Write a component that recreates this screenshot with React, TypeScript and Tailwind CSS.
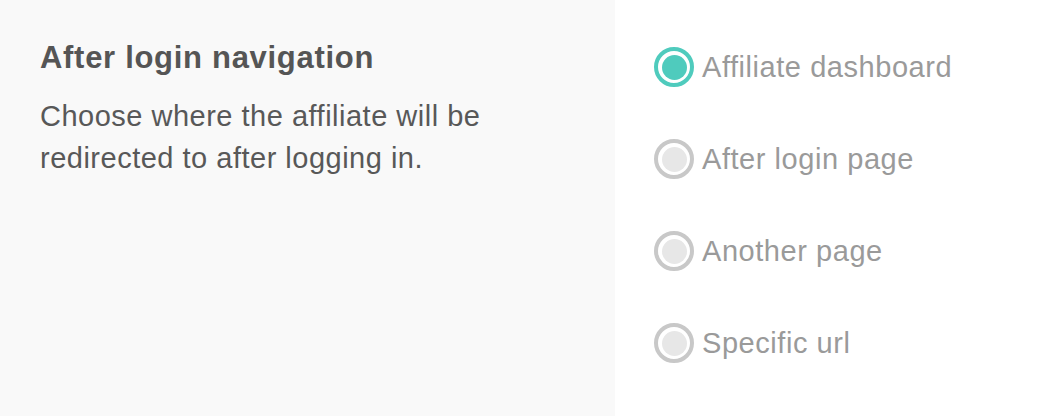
import React, { useState } from 'react';

const options = ['Affiliate dashboard', 'After login page', 'Another page', 'Specific url'];

function Radio({ checked }: { checked: boolean }) {
  return (
    <span
      className={
        'flex h-[40px] w-[40px] shrink-0 items-center justify-center rounded-full border-[4px] bg-white ' +
        (checked ? 'border-[#4fcbbd]' : 'border-[#c8c8c8]')
      }
    >
      <span
        className={'h-[25px] w-[25px] rounded-full ' + (checked ? 'bg-[#4fcbbd]' : 'bg-[#e7e7e7]')}
      />
    </span>
  );
}

export default function App() {
  const [selected, setSelected] = useState(0);

  return (
    <div className="flex h-[416px] w-[1056px] bg-white font-['Liberation_Sans',Arial,sans-serif]">
      <div className="w-[615px] bg-[#f9f9f9] pl-[40px] pt-[38px]">
        <h2 className="text-[31px] font-bold leading-[40px] tracking-[0.7px] text-[#555555]">
          After login navigation
        </h2>
        <p className="mt-[17px] w-[470px] text-[29px] leading-[42px] tracking-[0.5px] text-[#585858]">
          Choose where the affiliate will be redirected to after logging in.
        </p>
      </div>
      <div className="flex flex-col gap-[52px] pl-[39px] pt-[47px]">
        {options.map((label, i) => (
          <label
            key={label}
            className="flex cursor-pointer items-center gap-[8px]"
            onClick={() => setSelected(i)}
          >
            <Radio checked={selected === i} />
            <span className="text-[29px] leading-[40px] tracking-[0.55px] text-[#9a9a9a]">{label}</span>
          </label>
        ))}
      </div>
    </div>
  );
}
